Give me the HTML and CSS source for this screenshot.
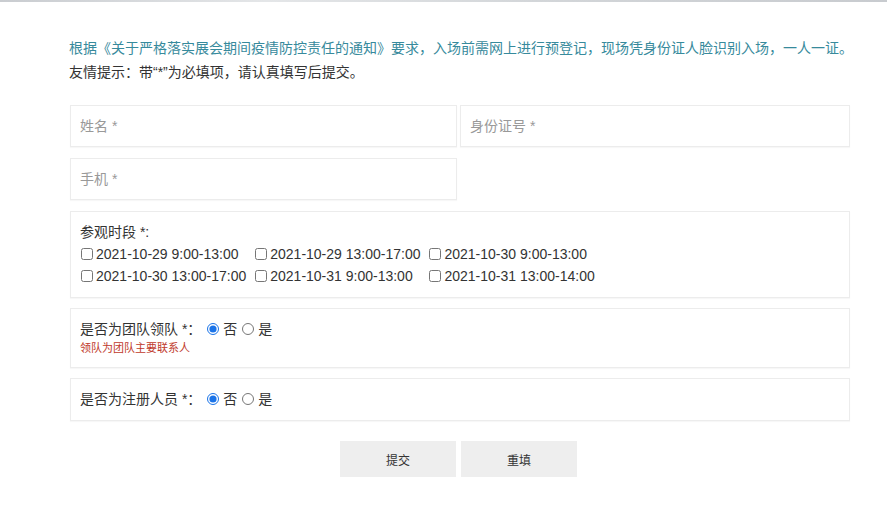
FILE: index.html
```html
<!DOCTYPE html>
<html lang="zh-CN">
<head>
<meta charset="utf-8">
<title>预登记</title>
<link rel="stylesheet" href="styles.css">
</head>
<body>
<div class="topbar"></div>
<div class="page">
  <div class="notice">
    <p class="notice-main">根据《关于严格落实展会期间疫情防控责任的通知》要求，入场前需网上进行预登记，现场凭身份证人脸识别入场，一人一证。</p>
    <p class="notice-tip">友情提示：带“*”为必填项，请认真填写后提交。</p>
  </div>
  <form class="form">
    <div class="fields">
      <input class="field" type="text" placeholder="姓名 *">
      <input class="field" type="text" placeholder="身份证号 *">
      <input class="field" type="text" placeholder="手机 *">
    </div>
    <div class="panel">
      <div class="label">参观时段 *:</div>
      <div class="slots">
        <label class="slot"><input type="checkbox">2021-10-29 9:00-13:00</label>
        <label class="slot"><input type="checkbox">2021-10-29 13:00-17:00</label>
        <label class="slot"><input type="checkbox">2021-10-30 9:00-13:00</label>
        <label class="slot"><input type="checkbox">2021-10-30 13:00-17:00</label>
        <label class="slot"><input type="checkbox">2021-10-31 9:00-13:00</label>
        <label class="slot"><input type="checkbox">2021-10-31 13:00-14:00</label>
      </div>
    </div>
    <div class="panel">
      <div class="line">
        <span class="label-inline">是否为团队领队 *：</span>
        <label class="opt"><input type="radio" name="leader" checked>否</label>
        <label class="opt"><input type="radio" name="leader">是</label>
      </div>
      <div class="hint">领队为团队主要联系人</div>
    </div>
    <div class="panel">
      <div class="line">
        <span class="label-inline">是否为注册人员 *：</span>
        <label class="opt"><input type="radio" name="reg" checked>否</label>
        <label class="opt"><input type="radio" name="reg">是</label>
      </div>
    </div>
    <div class="actions">
      <button type="button" class="btn">提交</button>
      <button type="reset" class="btn">重填</button>
    </div>
  </form>
</div>
</body>
</html>
```
FILE: styles.css
```css
* { box-sizing: border-box; }
html, body {
  margin: 0;
  padding: 0;
  background: #ffffff;
}
body {
  font-family: "Liberation Sans", "Noto Sans CJK SC", sans-serif;
  font-size: 14px;
  color: #333;
}
.topbar {
  height: 2px;
  background: linear-gradient(to right, #c9ccd0, #e4e6e8 30%, #d3d6d9 60%, #c8cbcf);
}
.page {
  padding-left: 69px;
  width: 851px;
}
.notice {
  margin-top: 34px;
}
.notice p {
  margin: 0;
  line-height: 24px;
  white-space: nowrap;
}
.notice-main {
  color: #378a9c;
}
.notice-tip {
  color: #333;
}
.form {
  margin-top: 21px;
  margin-left: 1px;
  width: 780px;
  display: flex;
  flex-direction: column;
  gap: 10px;
}
.fields {
  display: grid;
  grid-template-columns: 387px 390px;
  column-gap: 3px;
  row-gap: 11px;
  margin-bottom: 1px;
}
.field {
  height: 42px;
  border: 1px solid #ececec;
  box-shadow: 0 1px 1px rgba(0,0,0,0.03);
  padding: 0 9px;
  font-family: "Liberation Sans", "Noto Sans CJK SC", sans-serif;
  font-size: 14px;
  color: #333;
  outline: none;
  background: #fff;
}
.field::placeholder {
  color: #999;
}
.panel {
  border: 1px solid #ececec;
  box-shadow: 0 1px 1px rgba(0,0,0,0.03);
  padding: 9px 9px 10px;
  background: #fff;
}
.label {
  line-height: 22px;
  color: #333;
}
.slots {
  display: grid;
  grid-template-columns: auto auto auto;
  justify-content: start;
  column-gap: 8px;
}
.slot {
  line-height: 22px;
  display: flex;
  align-items: center;
  white-space: nowrap;
  color: #333;
}
.slot input {
  width: 12px;
  height: 12px;
  margin: 0 3px 0 1px;
}
.line {
  line-height: 22px;
  display: flex;
  align-items: center;
}
.label-inline {
  color: #333;
  margin-right: 1px;
}
.opt {
  display: flex;
  align-items: center;
  color: #333;
}
.opt input {
  width: 12px;
  height: 12px;
  margin: 0 4px 0 5px;
  accent-color: #1a73e8;
}
.hint {
  font-size: 11px;
  line-height: 16px;
  color: #c0392b;
  padding-bottom: 1px;
}
.actions {
  margin-top: 10px;
  display: flex;
  justify-content: center;
  gap: 5px;
  padding-right: 3px;
}
.btn {
  width: 116px;
  height: 36px;
  border: none;
  background: #eeeeee;
  font-family: "Liberation Sans", "Noto Sans CJK SC", sans-serif;
  font-size: 12px;
  color: #333;
  padding: 0;
}
```
